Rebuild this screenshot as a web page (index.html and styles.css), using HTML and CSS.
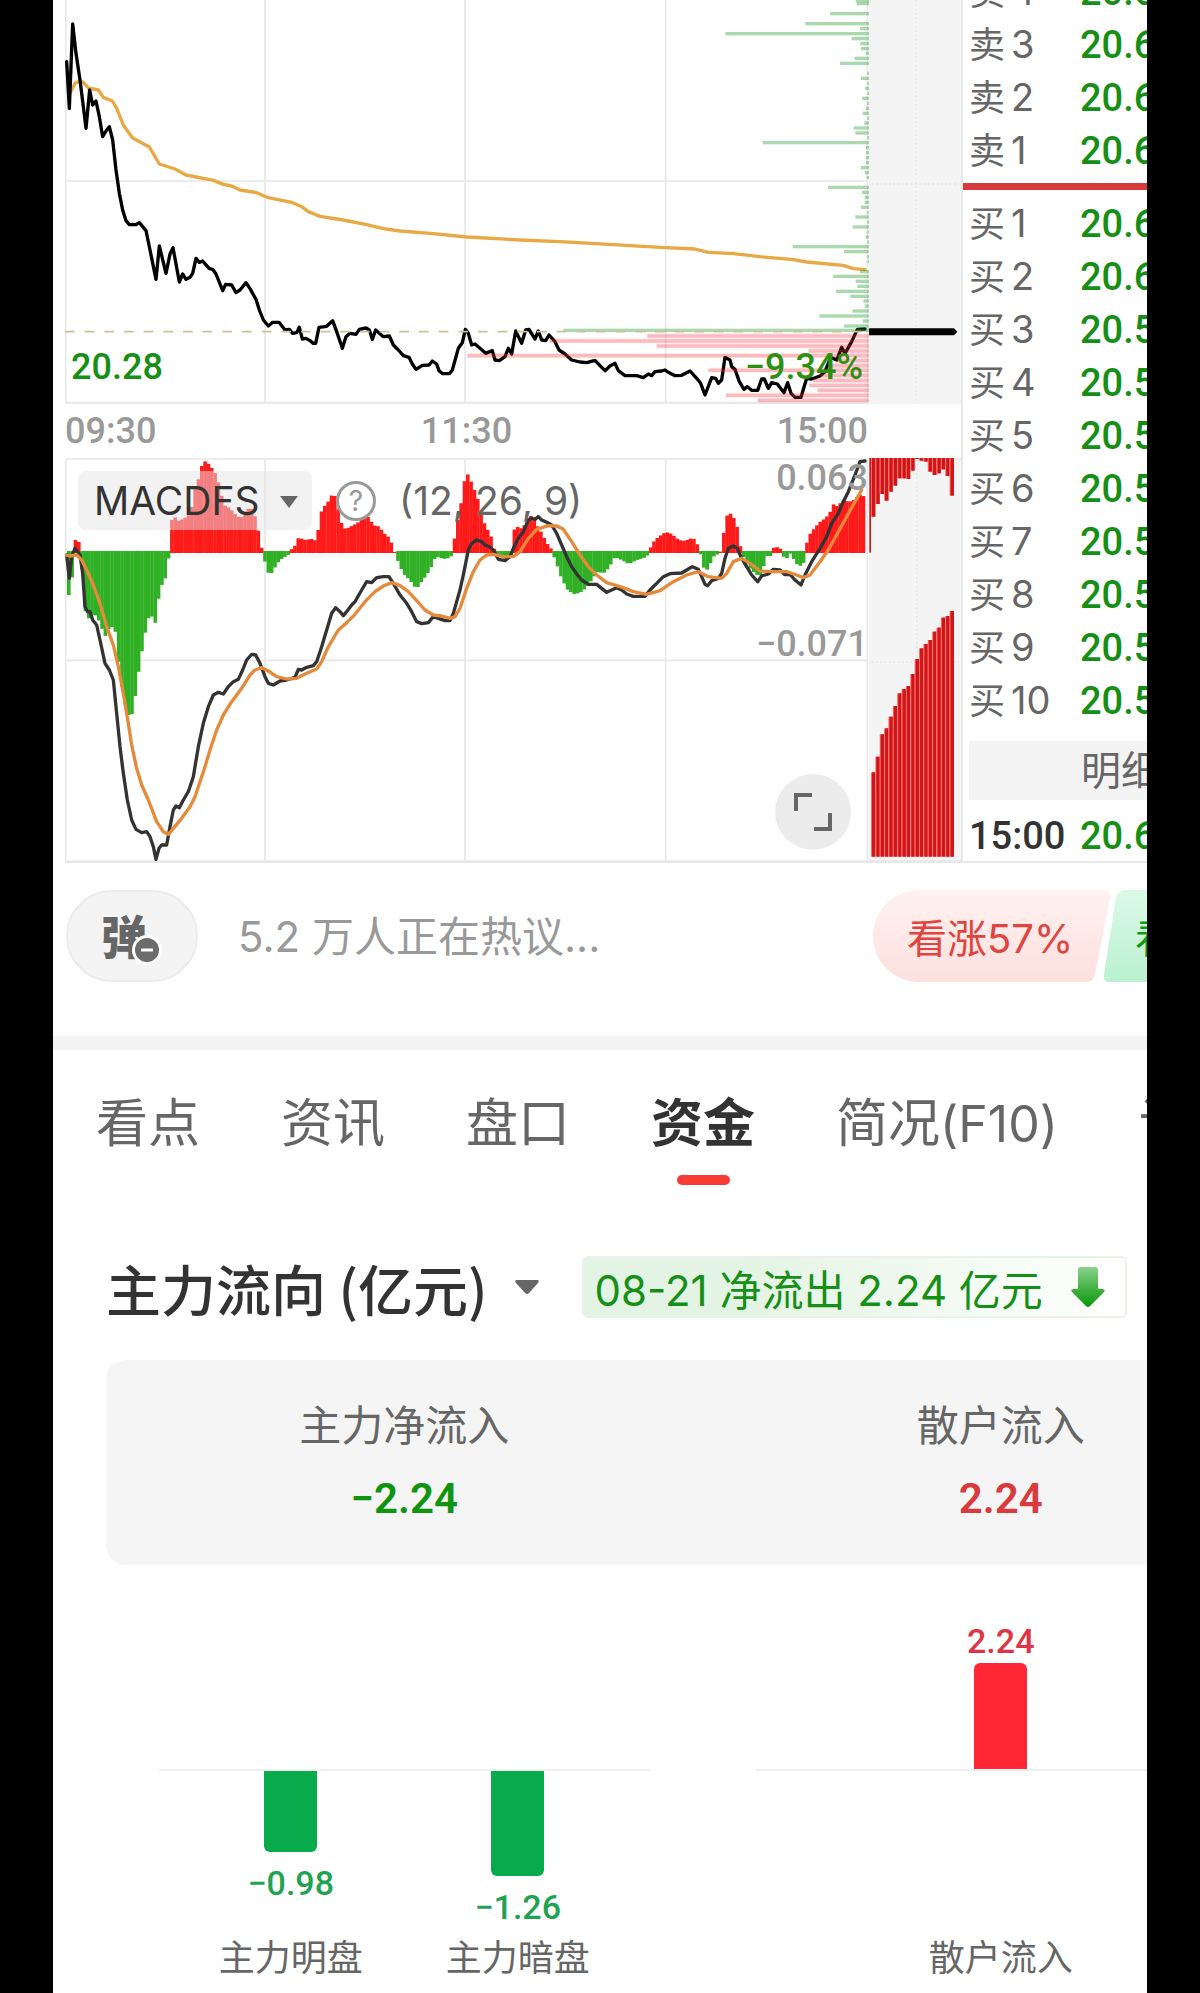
FILE: index.html
```html
<!DOCTYPE html>
<html lang="zh-CN">
<head>
    <meta charset="UTF-8">
    <meta name="viewport" content="width=device-width, initial-scale=1.0">
    <title>分时 - 资金</title>
    <link rel="stylesheet" href="styles.css">
</head>
<body>
    <main class="phone">
        <section class="quotes">
            <div class="charts">
                <div class="chart">
                    <svg class="plot" viewBox="45 0 2688 1212" aria-label="分时走势">
                        <rect class="strip" x="2457" y="0" width="276" height="1215"/>
                        <path class="grid" d="M47 0V1210M645 0V1210M1245 0V1210M1847 0V1210M2452 0V1210M47 543H2452"/>
                        <path class="grid thick" d="M45 1209H2455"/>
                        <path class="dots" d="M2598 0V1210M2465 552H2725"/>
                        <polyline class="average" points="60,280 75,250 90,243 100,247 115,264 145,270 160,292 187,303 200,325 220,375 247,413 298,441 328,492 375,507 408,525 490,541 520,553 545,558 570,570 620,578 655,593 725,607 755,620 775,635 810,649 880,660 950,674 1000,686 1050,693 1150,701 1250,711 1410,720 1530,725 1690,734 1830,742 1935,747 1975,757 2050,761 2130,770 2230,779 2270,786 2380,796 2410,806 2445,809"/>
                        <polyline class="price" points="50,185 58,325 68,72 78,160 90,240 100,320 108,385 119,270 128,315 138,303 148,350 158,410 168,393 178,380 188,420 198,510 208,580 218,630 228,662 238,674 258,674 268,668 288,692 300,750 318,838 328,738 348,820 360,762 369,743 388,846 398,822 408,838 420,832 428,820 438,775 448,787 458,783 478,806 488,808 498,822 518,872 527,853 545,855 558,878 570,870 588,848 600,866 618,898 628,930 640,960 655,978 668,967 687,967 705,990 718,988 728,1000 740,998 748,982 757,1017 768,1015 780,1022 790,1030 797,1030 807,982 830,979 848,962 860,995 877,1045 888,1010 900,1000 918,1003 928,988 948,984 958,990 967,1018 977,990 1000,1010 1018,1008 1030,1035 1045,1050 1060,1067 1077,1072 1087,1092 1098,1108 1117,1096 1137,1095 1147,1083 1160,1092 1167,1112 1178,1121 1198,1121 1207,1110 1225,1045 1237,1028 1246,988 1255,1000 1265,1035 1275,1032 1290,1045 1307,1060 1327,1052 1335,1080 1348,1082 1365,1070 1375,1045 1385,1062 1397,993 1415,1030 1427,990 1437,988 1455,1017 1465,993 1475,1020 1487,1022 1497,1005 1515,1025 1527,1050 1545,1062 1565,1080 1590,1086 1610,1088 1635,1081 1650,1097 1665,1112 1680,1098 1695,1090 1705,1112 1725,1127 1760,1127 1780,1133 1795,1122 1805,1127 1815,1115 1835,1113 1845,1110 1855,1117 1875,1127 1895,1126 1920,1113 1940,1135 1952,1150 1965,1185 1985,1133 1997,1135 2005,1150 2015,1140 2025,1072 2040,1080 2045,1100 2055,1108 2068,1145 2082,1168 2092,1160 2105,1171 2123,1171 2135,1137 2143,1137 2155,1165 2165,1148 2182,1152 2202,1178 2213,1148 2223,1180 2235,1192 2253,1192 2270,1135 2285,1137 2310,1128 2325,1115 2342,1072 2360,1080 2375,1042 2385,1060 2405,1025 2422,988 2445,987"/>
                        <g id="volume-profile"></g>
                        <path class="dash" d="M45 995H2455"/>
                        <path class="current" d="M2457 985H2712L2722 995L2712 1006H2457Z"/>
                    </svg>
                    <span class="tag tag-low">20.28</span>
                    <span class="tag tag-percent">−9.34%</span>
                </div>

                <div class="time-axis">
                    <span>09:30</span>
                    <span>11:30</span>
                    <span>15:00</span>
                </div>

                <div class="chart">
                    <svg class="plot" viewBox="45 54 2688 1215" aria-label="MACDFS">
                        <rect class="strip" x="2457" y="54" width="276" height="1215"/>
                        <path class="grid" d="M47 57V1263M645 57V1263M1245 57V1263M1847 57V1263M2452 57V1263M45 57H2733M47 661H2452"/>
                        <path class="grid thick" d="M45 1265H2733"/>
                        <path class="dots" d="M2600 60V1250M2465 666H2725"/>
                        <g id="histogram" transform="scale(3) translate(-50 -440)"></g>
                        <polyline class="dif" points="50,345 58,415 65,350 75,325 90,345 98,400 105,500 112,515 120,515 128,540 140,555 150,600 165,670 178,690 190,720 200,820 210,920 220,1000 232,1080 245,1140 258,1168 275,1178 290,1175 300,1190 310,1220 318,1258 327,1225 335,1215 350,1215 360,1160 370,1110 378,1098 388,1103 400,1080 415,1055 430,1010 445,920 460,850 475,800 490,765 505,757 520,762 535,740 550,725 565,718 578,690 590,660 605,643 617,645 630,670 645,710 655,730 670,735 690,723 710,720 735,712 745,688 755,690 770,682 790,677 800,665 815,620 830,570 845,520 857,503 870,515 880,527 890,515 905,495 915,485 935,450 950,425 965,428 980,413 1000,410 1017,410 1030,430 1050,465 1070,490 1085,515 1100,545 1115,551 1135,548 1150,530 1165,535 1185,542 1200,542 1210,520 1230,450 1242,395 1255,330 1265,310 1280,300 1295,305 1305,315 1315,318 1330,330 1345,358 1365,362 1380,350 1390,325 1405,295 1420,275 1435,240 1445,235 1455,238 1465,230 1475,240 1490,247 1505,255 1520,280 1535,315 1550,350 1565,380 1580,402 1595,420 1615,433 1640,433 1655,445 1670,457 1685,450 1700,443 1715,450 1730,462 1750,469 1785,469 1800,450 1820,430 1840,410 1860,401 1895,399 1910,390 1927,380 1945,388 1955,410 1965,433 1973,437 1985,422 2005,415 2015,400 2025,355 2035,325 2050,318 2062,325 2075,355 2090,380 2105,405 2123,425 2135,408 2155,402 2170,388 2190,390 2205,404 2220,403 2235,420 2253,435 2265,405 2285,365 2310,325 2330,290 2345,250 2365,220 2375,195 2395,155 2415,105 2430,65 2445,63"/>
                        <polyline class="dea" points="47,345 60,348 80,345 95,360 110,390 130,435 150,490 170,560 190,615 205,680 220,760 235,850 245,915 260,985 275,1035 295,1080 320,1145 340,1175 355,1183 370,1165 395,1135 420,1100 435,1070 450,1025 465,980 480,930 500,870 520,825 545,785 575,745 600,705 615,690 635,683 655,693 680,710 710,717 740,715 770,700 800,687 815,665 835,620 865,570 890,548 915,523 945,485 975,455 1000,438 1025,428 1050,437 1075,455 1100,482 1125,510 1150,525 1175,528 1200,535 1215,530 1230,505 1250,445 1270,395 1290,360 1310,345 1330,343 1360,350 1390,350 1410,335 1435,295 1460,268 1495,257 1520,258 1540,268 1565,305 1590,345 1615,380 1640,405 1670,428 1710,440 1750,455 1790,463 1830,452 1870,425 1910,405 1945,395 1975,410 2015,415 2030,400 2050,365 2075,355 2100,370 2130,393 2170,395 2210,395 2240,405 2260,413 2280,405 2310,365 2335,330 2360,285 2390,230 2415,185 2435,150"/>
                        <g id="auction"></g>
                    </svg>

                    <div class="indicator">
                        <div class="indicator-select">
                            <select aria-label="指标">
                                <option>MACDFS</option>
                            </select>
                            <svg class="caret" viewBox="0 0 20 14"><path d="M1 1H19L10 13Z"/></svg>
                        </div>
                        <button class="help" aria-label="指标说明">?</button>
                        <span>(12, 26, 9)</span>
                    </div>
                    <span class="tag tag-max">0.063</span>
                    <span class="tag tag-mid">−0.071</span>
                    <button class="expand" aria-label="全屏">
                        <svg viewBox="0 0 40 40"><path d="M3 19V3H19M21 37H37V21"/></svg>
                    </button>
                </div>
            </div>

            <aside class="book">
                <table>
                    <tr><th>卖<span>4</span></th><td>20.63</td></tr>
                    <tr><th>卖<span>3</span></th><td>20.62</td></tr>
                    <tr><th>卖<span>2</span></th><td>20.61</td></tr>
                    <tr><th>卖<span>1</span></th><td>20.60</td></tr>
                </table>
                <hr>
                <table>
                    <tr><th>买<span>1</span></th><td>20.60</td></tr>
                    <tr><th>买<span>2</span></th><td>20.60</td></tr>
                    <tr><th>买<span>3</span></th><td>20.59</td></tr>
                    <tr><th>买<span>4</span></th><td>20.58</td></tr>
                    <tr><th>买<span>5</span></th><td>20.57</td></tr>
                    <tr><th>买<span>6</span></th><td>20.56</td></tr>
                    <tr><th>买<span>7</span></th><td>20.55</td></tr>
                    <tr><th>买<span>8</span></th><td>20.54</td></tr>
                    <tr><th>买<span>9</span></th><td>20.53</td></tr>
                    <tr><th>买<span>10</span></th><td>20.52</td></tr>
                </table>
                <button class="detail-btn">明细</button>
                <div class="trade"><time>15:00</time><b>20.60</b></div>
            </aside>
        </section>

        <section class="comment-bar">
            <button class="danmu" aria-label="弹幕开关">
                弹
                <svg viewBox="0 0 30 30">
                    <circle cx="15" cy="15" r="13.5"/>
                    <path d="M9 15H21"/>
                </svg>
            </button>
            <input type="text" placeholder="5.2 万人正在热议..." aria-label="评论">
            <div class="votes">
                <button class="vote vote-up">
                    <svg viewBox="0 0 238 92" preserveAspectRatio="none">
                        <defs>
                            <linearGradient id="upFill" x1="0" y1="0" x2="0" y2="1">
                                <stop offset="0" stop-color="#fff2f1"/>
                                <stop offset="1" stop-color="#fde0de"/>
                            </linearGradient>
                        </defs>
                        <path fill="url(#upFill)" d="M46 0H231Q239 0 237 8L222 84Q220 92 213 92H46A46 46 0 0 1 46 0Z"/>
                    </svg>
                    <span>看涨57%</span>
                </button>
                <button class="vote vote-down">
                    <svg viewBox="0 0 238 92" preserveAspectRatio="none">
                        <defs>
                            <linearGradient id="downFill" x1="0" y1="0" x2="0" y2="1">
                                <stop offset="0" stop-color="#dcf9e8"/>
                                <stop offset="1" stop-color="#baf1d0"/>
                            </linearGradient>
                        </defs>
                        <path fill="url(#downFill)" d="M22 0H192A46 46 0 0 1 192 92H8Q-1 92 1 84L13 8Q15 0 22 0Z"/>
                    </svg>
                    <span>看跌43%</span>
                </button>
            </div>
        </section>

        <nav class="tabs">
            <a href="#">看点</a>
            <a href="#">资讯</a>
            <a href="#">盘口</a>
            <a href="#" class="active">资金</a>
            <a href="#">简况<small>(F10)</small></a>
            <a href="#">讨论</a>
        </nav>

        <section class="flow">
            <header class="flow-header">
                <button class="flow-title">
                    主力流向 (亿元)
                    <svg class="caret" viewBox="0 0 26 16"><path d="M3 1H23Q26 1 24 4L15 14Q13 16 11 14L2 4Q0 1 3 1Z"/></svg>
                </button>
                <div class="flow-badge">
                    08-21 净流出 2.24 亿元
                    <svg viewBox="0 0 34 42">
                        <defs>
                            <linearGradient id="arrowFill" x1="0" y1="0" x2="0" y2="1">
                                <stop offset="0" stop-color="#8bd08b"/>
                                <stop offset="1" stop-color="#079807"/>
                            </linearGradient>
                        </defs>
                        <path fill="url(#arrowFill)" d="M10 1H24Q27 1 27 4V23H32Q35 24 33 26L19 40Q17 42 15 40L1 26Q-1 24 2 23H7V4Q7 1 10 1Z"/>
                    </svg>
                </div>
            </header>

            <div class="summary">
                <div>
                    <p>主力净流入</p>
                    <strong class="down">−2.24</strong>
                </div>
                <div>
                    <p>散户流入</p>
                    <strong class="up">2.24</strong>
                </div>
            </div>

            <div class="bar-charts">
                <div class="bar-chart">
                    <div class="above"></div>
                    <div class="below">
                        <div class="item"><div class="bar" style="height: 81px"></div>−0.98</div>
                        <div class="item"><div class="bar" style="height: 105px"></div>−1.26</div>
                    </div>
                    <div class="names"><span>主力明盘</span><span>主力暗盘</span></div>
                </div>
                <div class="bar-chart">
                    <div class="above">
                        <div class="item">2.24<div class="bar" style="height: 106px"></div></div>
                    </div>
                    <div class="below"></div>
                    <div class="names"><span>散户流入</span></div>
                </div>
            </div>
        </section>
    </main>

    <script src="chart.js"></script>
</body>
</html>
```
FILE: styles.css
```css
/* General Styling */
* {
    margin: 0;
    padding: 0;
    box-sizing: border-box;
}

body {
    background-color: #000;
    padding: 0 53px;
    font-family: Inter, "Noto Sans CJK SC", sans-serif;
    color: #666;
}

button, input, select {
    border: none;
    background: none;
    font: inherit;
    color: inherit;
}

button {
    cursor: pointer;
}

.phone {
    min-height: 100vh;
    background: #fff;
    overflow: hidden;
}

/* Charts */
.quotes {
    display: flex;
    padding-left: 12px;
}

.charts {
    flex: 1;
    min-width: 0;
}

.chart {
    position: relative;
}

.plot {
    display: block;
    width: 100%;
}

.strip {
    fill: #f4f4f4;
}

.grid {
    fill: none;
    stroke: #e8e8e8;
    stroke-width: 5;
}

.grid.thick {
    stroke-width: 8;
}

.dots {
    stroke: #e4e4e4;
    stroke-width: 4;
    stroke-dasharray: 5 8;
}

.dash {
    stroke: #cfc09c;
    stroke-width: 5;
    stroke-dasharray: 29 30;
}

.price, .average, .dif, .dea {
    fill: none;
    stroke-width: 10;
    stroke-linejoin: round;
    stroke-linecap: round;
}

.price {
    stroke: #000;
}

.average {
    stroke: #e8a945;
}

.dif {
    stroke: #333;
}

.dea {
    stroke: #e58a3a;
}

.current {
    fill: #000;
}

.sell-volume {
    fill: rgba(40, 160, 50, 0.4);
}

.buy-volume {
    fill: rgba(235, 50, 60, 0.25);
}

.buy-glow {
    fill: rgba(255, 60, 70, 0.12);
}

.rise {
    fill: #ff1a1a;
}

.fall {
    fill: #30b024;
}

.auction-edge {
    fill: #ff6a66;
}

.auction-bar {
    fill: #cf1518;
}

.tag, .time-axis {
    font-family: Roboto, sans-serif;
    font-size: 36px;
    font-weight: 500;
    line-height: 40px;
    color: #999;
}

.tag {
    position: absolute;
    right: 93px;
}

.tag-low {
    left: 6px;
    right: auto;
    bottom: 17px;
    color: #168f16;
}

.tag-percent {
    right: 98px;
    bottom: 17px;
    color: #2c9010;
}

.tag-max {
    top: 0;
}

.tag-mid {
    top: 166px;
}

.time-axis {
    display: flex;
    justify-content: space-between;
    align-items: center;
    height: 54px;
    padding-right: 93px;
}

.indicator {
    position: absolute;
    top: 13px;
    left: 13px;
    display: flex;
    align-items: center;
    font-size: 39px;
    line-height: 59px;
}

.indicator-select {
    position: relative;
    margin-right: 24px;
}

.indicator-select select {
    width: 234px;
    height: 59px;
    padding-left: 16px;
    border-radius: 8px;
    background: rgba(229, 229, 229, 0.5);
    color: #333;
    appearance: none;
}

.indicator-select .caret {
    position: absolute;
    top: 24px;
    right: 13px;
    width: 20px;
}

.caret {
    fill: #666;
}

.help {
    width: 40px;
    height: 40px;
    margin-right: 23px;
    border: 3px solid #999;
    border-radius: 50%;
    font-size: 28px;
    line-height: 34px;
    color: #999;
}

.expand {
    position: absolute;
    right: 110px;
    bottom: 13px;
    width: 76px;
    height: 76px;
    border-radius: 50%;
    background: #ececec;
}

.expand svg {
    display: block;
    width: 40px;
    margin: 0 auto;
    fill: none;
    stroke: #666;
    stroke-width: 4;
}

/* Order Book */
.book {
    width: 186px;
    margin-top: -35px;
    padding-left: 6px;
    border-left: 2px solid #e8e8e8;
    border-bottom: 2px solid #e8e8e8;
    overflow: hidden;
    white-space: nowrap;
}

.book table {
    width: 304px;
    border-collapse: collapse;
    table-layout: fixed;
}

.book tr {
    height: 53px;
}

.book th {
    width: 111px;
    font-size: 36px;
    font-weight: 400;
    line-height: 48px;
    text-align: left;
}

.book th span {
    margin-left: 6px;
    font-size: 38px;
}

.book td, .trade {
    font-family: Roboto, sans-serif;
    font-size: 38px;
    font-weight: 500;
    line-height: 48px;
    color: #168f16;
}

.book hr {
    height: 7px;
    margin: 6px 0 7px -6px;
    border: none;
    background: #d63a3c;
}

.detail-btn {
    display: block;
    width: 304px;
    height: 59px;
    margin-top: 14px;
    background: #f4f4f4;
    font-size: 40px;
    line-height: 59px;
}

.trade {
    display: flex;
    padding-top: 12px;
}

.trade time {
    flex: none;
    width: 111px;
    color: #333;
}

.trade b {
    font-weight: 500;
}

/* Comment Bar */
.comment-bar {
    display: flex;
    align-items: center;
    padding: 27px 0 54px 13px;
    border-bottom: 14px solid #f4f4f4;
}

.danmu {
    position: relative;
    width: 132px;
    height: 92px;
    padding: 0 16px 4px 0;
    border: 2px solid #ececec;
    border-radius: 46px;
    background: #f4f4f4;
    font-size: 46px;
    font-weight: 900;
}

.danmu svg {
    position: absolute;
    top: 43px;
    left: 64px;
    width: 30px;
    fill: #6c6c6c;
    stroke: #fff;
    stroke-width: 3;
}

.comment-bar input {
    flex: 1;
    min-width: 0;
    padding-left: 40px;
    font-size: 42px;
}

.comment-bar input::placeholder {
    color: #999;
}

.votes {
    display: flex;
    margin-right: -194px;
}

.vote {
    position: relative;
    width: 238px;
    height: 92px;
    padding-left: 34px;
    font-size: 40px;
    text-align: left;
    white-space: nowrap;
}

.vote svg {
    position: absolute;
    top: 0;
    left: 0;
    width: 100%;
    height: 100%;
}

.vote span {
    position: relative;
}

.vote-up {
    color: #e0443f;
}

.vote-down {
    margin-left: -8px;
    padding-left: 32px;
    color: #0f9a0f;
}

/* Tabs */
.tabs {
    display: flex;
    gap: 81px;
    padding: 37px 0 0 43px;
    white-space: nowrap;
}

.tabs a {
    font-size: 52px;
    line-height: 74px;
    color: #666;
    text-decoration: none;
}

.tabs small {
    font-size: 50px;
}

.tabs .active {
    font-weight: 700;
    color: #333;
}

.tabs .active::after {
    content: "";
    display: block;
    width: 53px;
    height: 10px;
    margin: 14px auto 0;
    border-radius: 5px;
    background: #f93c33;
}

/* Money Flow */
.flow {
    margin-right: -152px;
    padding: 71px 0 0 53px;
}

.flow-header {
    display: flex;
    align-items: center;
    gap: 42px;
    margin-bottom: 42px;
    white-space: nowrap;
}

.flow-title {
    display: flex;
    align-items: center;
    gap: 26px;
    font-family: "Noto Sans CJK SC", sans-serif;
    font-size: 55px;
    font-weight: 500;
    line-height: 62px;
    color: #333;
}

.flow-title .caret {
    width: 26px;
}

.flow-badge {
    display: flex;
    align-items: center;
    gap: 28px;
    height: 62px;
    padding: 0 20px 0 11px;
    border: 2px solid #e6f3e6;
    border-radius: 6px;
    background: linear-gradient(90deg, #e4f4e4 30%, #fff);
    font-size: 42px;
    color: #168f16;
}

.flow-badge svg {
    width: 34px;
}

.summary {
    display: grid;
    grid-template-columns: 1fr 1fr;
    padding: 36px 0;
    border-radius: 20px;
    background: #f5f5f5;
    font-size: 42px;
    text-align: center;
}

.summary p {
    line-height: 60px;
}

.summary strong {
    display: block;
    margin-top: 13px;
    font-family: Roboto, sans-serif;
    font-weight: 600;
    line-height: 60px;
}

.summary .down {
    color: #0f940f;
}

.summary .up {
    color: #d93a3c;
}

.bar-charts {
    display: grid;
    grid-template-columns: 1fr 1fr;
}

.bar-chart {
    padding: 0 53px;
}

.above, .below, .names {
    display: flex;
    justify-content: center;
    gap: 83px;
}

.above {
    align-items: flex-end;
    height: 206px;
    border-bottom: 2px solid #f0f0f0;
}

.below {
    height: 162px;
}

.item {
    width: 144px;
    font-family: Roboto, sans-serif;
    font-size: 34px;
    font-weight: 500;
    line-height: 40px;
    text-align: center;
}

.bar {
    width: 53px;
    margin: 0 auto;
}

.above .item {
    color: #dc3545;
}

.above .bar {
    margin-top: 2px;
    border-radius: 6px 6px 0 0;
    background: #ff2736;
}

.below .item {
    color: #1fa353;
}

.below .bar {
    margin-bottom: 11px;
    border-radius: 0 0 6px 6px;
    background: #08ab4b;
}

.names {
    font-size: 36px;
    line-height: 50px;
}
```
FILE: chart.js
```js
const SVG_NS = 'http://www.w3.org/2000/svg';

function addRect(parent, cls, x, y, width, height) {
    const rect = document.createElementNS(SVG_NS, 'rect');
    rect.setAttribute('class', cls);
    rect.setAttribute('x', x);
    rect.setAttribute('y', y);
    rect.setAttribute('width', width);
    rect.setAttribute('height', height);
    parent.appendChild(rect);
}

// Volume by price: [y, bar length]
const sellVolume = [
    [2, 40], [11, 37], [41, 117], [71, 191], [86, 27], [101, 431], [116, 52], [131, 26], [146, 24], [160, 10],
    [175, 44], [190, 87], [220, 5], [235, 24], [250, 5], [265, 11], [280, 5], [295, 21], [310, 5], [325, 10],
    [340, 19], [355, 5], [369, 14], [384, 46], [399, 41], [413, 5], [428, 319], [443, 9], [458, 9], [473, 9],
    [488, 9], [503, 24], [518, 12], [533, 7], [562, 123], [577, 21], [592, 13], [607, 13], [622, 24], [637, 5],
    [651, 41], [666, 5], [681, 49], [696, 5], [711, 10], [726, 5], [740, 229], [755, 75], [770, 5], [785, 4],
    [815, 27], [829, 107], [844, 40], [859, 35], [874, 99], [889, 56], [903, 17], [918, 13], [933, 50],
    [948, 149], [963, 19], [978, 75], [991, 917]
];
const buyVolume = [
    [1008, 665], [1023, 957], [1038, 637], [1053, 182], [1067, 1205], [1082, 97], [1097, 117], [1111, 482],
    [1126, 147], [1141, 167], [1156, 179], [1171, 154], [1186, 429], [1201, 334]
];

const profile = document.getElementById('volume-profile');
sellVolume.forEach(([y, len]) => addRect(profile, 'sell-volume', 2457 - len, y - 5, len, 10));
buyVolume.forEach(([y, len]) => {
    addRect(profile, 'buy-volume', 2457 - len, y - 5, len, 10);
    addRect(profile, 'buy-glow', 2457 - len, y - 8, len, 15);
});

// MACD histogram outline, filled with one bar per minute
const ZERO = 552;
const outline = [
    [67, 595], [70, 595], [71, 541], [76, 539], [78, 545], [80, 565], [82, 593], [84, 615], [85, 633], [87, 618],
    [92, 613], [98, 622], [103, 637], [108, 627], [113, 627], [116, 653], [118, 673], [122, 698], [126, 715],
    [130, 715], [132, 705], [135, 687], [138, 662], [142, 642], [145, 623], [148, 615], [152, 618], [155, 628],
    [157, 595], [161, 582], [165, 576], [167, 556], [168, 547], [170, 520], [174, 517], [177, 521], [183, 518],
    [187, 515], [190, 507], [193, 490], [196, 482], [199, 470], [201, 462], [205, 461], [208, 466], [212, 470],
    [215, 477], [218, 487], [222, 505], [228, 508], [232, 513], [238, 518], [242, 516], [247, 508], [250, 509],
    [254, 518], [257, 533], [259, 545], [262, 555], [264, 566], [267, 574], [270, 573], [274, 566], [278, 560],
    [283, 557], [286, 556], [288, 551], [293, 546], [297, 537], [302, 540], [310, 539], [315, 541], [317, 525],
    [320, 510], [325, 503], [328, 500], [331, 492], [333, 496], [336, 508], [339, 520], [341, 529], [346, 528],
    [352, 525], [357, 522], [362, 517], [368, 517], [371, 526], [375, 525], [379, 529], [383, 534], [388, 538],
    [391, 547], [394, 555], [398, 566], [402, 574], [408, 580], [413, 587], [417, 587], [420, 581], [425, 575],
    [430, 566], [434, 556], [438, 558], [444, 559], [449, 557], [451, 553], [453, 536], [457, 515], [460, 500],
    [463, 479], [467, 473], [470, 484], [474, 493], [478, 505], [481, 520], [486, 530], [491, 540], [493, 551],
    [496, 554], [502, 559], [506, 557], [510, 556], [512, 530], [517, 526], [520, 529], [524, 523], [527, 516],
    [530, 516], [535, 525], [540, 533], [545, 543], [549, 548], [552, 556], [556, 567], [560, 579], [566, 590],
    [572, 594], [578, 593], [584, 588], [590, 580], [595, 572], [602, 573], [607, 568], [613, 557], [620, 560],
    [627, 564], [635, 560], [645, 557], [648, 549], [653, 540], [658, 536], [664, 532], [670, 534], [677, 540],
    [683, 541], [690, 538], [694, 540], [697, 549], [700, 558], [703, 572], [707, 568], [711, 557], [718, 553],
    [720, 549], [723, 525], [726, 513], [730, 514], [734, 522], [737, 533], [739, 549], [743, 560], [748, 568],
    [753, 573], [758, 577], [762, 566], [765, 556], [769, 556], [771, 548], [776, 547], [779, 549], [782, 557],
    [785, 559], [787, 551], [790, 556], [795, 564], [801, 567], [803, 557], [806, 537], [812, 529], [818, 522],
    [824, 518], [829, 511], [831, 504], [837, 507], [840, 499], [847, 502], [852, 500], [858, 495], [865, 497]
];

const histogram = document.getElementById('histogram');
const step = 798 / 240;
let k = 0;
for (let i = 0; i < 240; i++) {
    const x = 67 + i * step;
    while (k < outline.length - 2 && outline[k + 1][0] < x) k++;
    const [x0, y0] = outline[k];
    const [x1, y1] = outline[k + 1];
    const y = y0 + (y1 - y0) * (x - x0) / (x1 - x0);
    if (y < ZERO) {
        addRect(histogram, 'rise', x, y, 3.6, ZERO + 1 - y);
    } else {
        addRect(histogram, 'fall', x, ZERO - 1, 3.6, y - ZERO + 1);
    }
}

// Closing auction: bars hanging from the top and standing on the bottom
const hanging = [230, 192, 162, 182, 155, 137, 115, 115, 117, 92, 57, 62, 65, 95, 105, 100, 88, 108, 167];
const standing = [997, 950, 883, 865, 830, 798, 760, 747, 738, 702, 657, 625, 612, 600, 575, 563, 533, 528, 513];

const auction = document.getElementById('auction');
addRect(auction, 'auction-bar', 2458, 54, 5, 284);
hanging.forEach((bottom, i) => {
    addRect(auction, 'auction-edge', 2463 + i * 13.1, 54, 13, bottom - 54);
    addRect(auction, 'auction-bar', 2466 + i * 13.1, 54, 10, bottom - 54);
});
standing.forEach((top, i) => {
    addRect(auction, 'auction-edge', 2463 + i * 13.1, top, 13, 1250 - top);
    addRect(auction, 'auction-bar', 2466 + i * 13.1, top, 10, 1250 - top);
});
```
